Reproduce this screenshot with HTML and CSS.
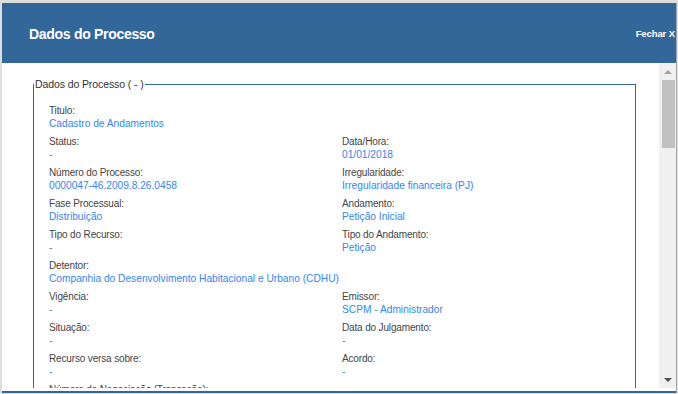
FILE: index.html
```html
<!DOCTYPE html>
<html lang="pt-BR">
<head>
  <meta charset="UTF-8" />
  <title>Dados do Processo</title>
  <link rel="stylesheet" href="styles.css">
</head>
<body>
  <div class="page">
    <div class="modal">
      <div class="modal-header">
        <h2>Dados do Processo</h2>
        <a href="#" class="close-link">Fechar X</a>
      </div>

      <div class="modal-body">
        <div class="scroll-content">
          <fieldset class="process-box">
            <legend>Dados do Processo ( - )</legend>
            <div class="fields">
              <div class="field full">
                <span class="label">Titulo:</span>
                <span class="value">Cadastro de Andamentos</span>
              </div>
              <div class="field">
                <span class="label">Status:</span>
                <span class="value">-</span>
              </div>
              <div class="field">
                <span class="label">Data/Hora:</span>
                <span class="value">01/01/2018</span>
              </div>
              <div class="field">
                <span class="label">Número do Processo:</span>
                <span class="value">0000047-46.2009.8.26.0458</span>
              </div>
              <div class="field">
                <span class="label">Irregularidade:</span>
                <span class="value">Irregularidade financeira (PJ)</span>
              </div>
              <div class="field">
                <span class="label">Fase Processual:</span>
                <span class="value">Distribuição</span>
              </div>
              <div class="field">
                <span class="label">Andamento:</span>
                <span class="value">Petição Inicial</span>
              </div>
              <div class="field">
                <span class="label">Tipo do Recurso:</span>
                <span class="value">-</span>
              </div>
              <div class="field">
                <span class="label">Tipo do Andamento:</span>
                <span class="value">Petição</span>
              </div>
              <div class="field full">
                <span class="label">Detentor:</span>
                <span class="value">Companhia do Desenvolvimento Habitacional e Urbano (CDHU)</span>
              </div>
              <div class="field">
                <span class="label">Vigência:</span>
                <span class="value">-</span>
              </div>
              <div class="field">
                <span class="label">Emissor:</span>
                <span class="value">SCPM - Administrador</span>
              </div>
              <div class="field">
                <span class="label">Situação:</span>
                <span class="value">-</span>
              </div>
              <div class="field">
                <span class="label">Data do Julgamento:</span>
                <span class="value">-</span>
              </div>
              <div class="field">
                <span class="label">Recurso versa sobre:</span>
                <span class="value">-</span>
              </div>
              <div class="field">
                <span class="label">Acordo:</span>
                <span class="value">-</span>
              </div>
              <div class="field full">
                <span class="label">Número da Negociação (Transação):</span>
                <span class="value">-</span>
              </div>
            </div>
          </fieldset>
        </div>

        <div class="scrollbar">
          <span class="arrow arrow-up"></span>
          <span class="thumb"></span>
          <span class="track-rest"></span>
          <span class="arrow arrow-down"></span>
        </div>
      </div>
    </div>
  </div>
</body>
</html>
```

FILE: styles.css
```css
:root {
  --header: #336699;
  --label: #454545;
  --value: #3386f0;
  --backdrop: #dedede;
}

* {
  box-sizing: border-box;
  margin: 0;
  padding: 0;
}

body {
  background: var(--backdrop);
  font-family: "Liberation Sans", Arial, sans-serif;
  width: 678px;
  height: 394px;
  overflow: hidden;
}

.page {
  padding: 3px 1px 0 2px;
}

.modal {
  width: 674px;
  height: 390px;
  background: white;
  display: flex;
  flex-direction: column;
  border-bottom: 2px solid var(--header);
  box-shadow: 1px 0 0 #a8a8a8;
}

/* header */
.modal-header {
  height: 60px;
  background: var(--header);
  display: flex;
  align-items: center;
  justify-content: space-between;
  padding: 0 1px 0 27px;
  color: white;
}

.modal-header h2 {
  font-size: 14px;
  font-weight: bold;
  letter-spacing: -0.3px;
  margin-top: 2px;
}

.close-link {
  color: white;
  text-decoration: none;
  font-size: 9.5px;
  font-weight: bold;
  letter-spacing: -0.1px;
}

/* body */
.modal-body {
  flex: 1;
  display: flex;
  min-height: 0;
  padding-bottom: 3px;
}

.scroll-content {
  flex: 1;
  overflow: hidden;
  padding: 15px 23px 0 31px;
}

.process-box {
  border: 1px solid var(--header);
  border-bottom: 0;
  padding: 0 0 0 15px;
  min-height: 400px;
}

.process-box legend {
  font-size: 10.5px;
  color: #333;
  padding: 0 1px;
  margin-left: -15px;
  line-height: 12px;
  letter-spacing: -0.1px;
}

.fields {
  display: grid;
  grid-template-columns: 293px 1fr;
  row-gap: 5px;
  padding-top: 14px;
}

.field {
  display: flex;
  flex-direction: column;
}

.field.full {
  grid-column: 1 / -1;
}

.label {
  font-size: 10px;
  line-height: 13px;
  color: var(--label);
  letter-spacing: -0.15px;
}

.value {
  font-size: 10.2px;
  line-height: 13px;
  color: var(--value);
}

/* fake scrollbar */
.scrollbar {
  width: 17px;
  background: #f0f0f0;
  display: flex;
  flex-direction: column;
  align-items: center;
  padding: 0 0 0 1px;
}

.arrow {
  height: 17px;
  display: flex;
  align-items: center;
  justify-content: center;
}

.arrow::before {
  content: "";
  border-left: 4px solid transparent;
  border-right: 4px solid transparent;
}

.arrow-up::before {
  border-bottom: 4px solid #a3a3a3;
}

.arrow-down::before {
  border-top: 4px solid #505050;
}

.thumb {
  width: 13px;
  height: 68px;
  background: #c1c1c1;
}

.track-rest {
  flex: 1;
}
```
